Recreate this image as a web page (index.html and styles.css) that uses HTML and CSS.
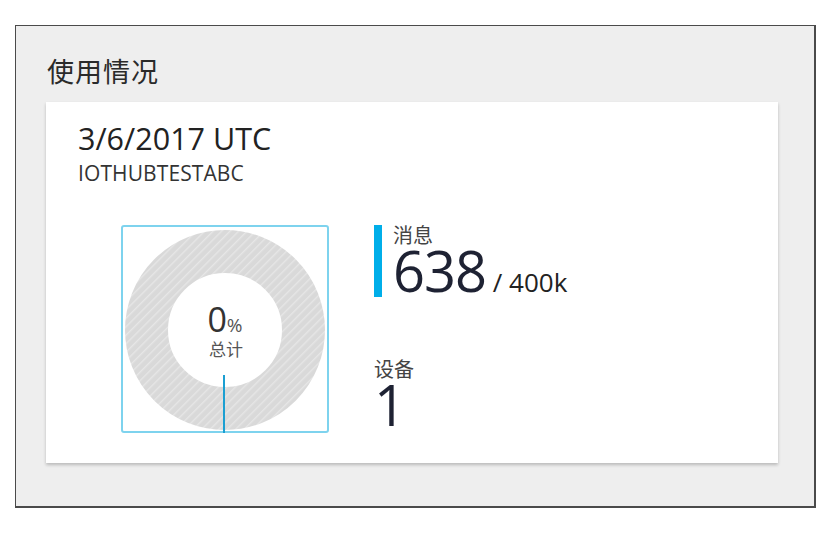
FILE: index.html
```html
<!DOCTYPE html>
<html lang="zh-CN">
<head>
<meta charset="utf-8">
<title>使用情况</title>
<link rel="stylesheet" href="styles.css">
</head>
<body>
<div class="panel">
  <h2 class="panel-title">使用情况</h2>
  <div class="card">
    <div class="card-head">
      <div class="date">3/6/2017 UTC</div>
      <div class="hub">IOTHUBTESTABC</div>
    </div>
    <div class="card-body">
      <div class="donut-box">
        <svg class="donut" width="204" height="204" viewBox="0 0 204 204">
          <defs>
            <pattern id="stripes" width="6" height="6" patternUnits="userSpaceOnUse" patternTransform="rotate(45)">
              <rect width="6" height="6" fill="#d9d9d9"/>
              <rect x="0" y="0" width="1.4" height="6" fill="#e6e6e6"/>
            </pattern>
          </defs>
          <circle cx="102" cy="103" r="78.5" fill="none" stroke="url(#stripes)" stroke-width="43"/>
          <line x1="101" y1="148" x2="101" y2="206" stroke="#1b9fd2" stroke-width="2"/>
        </svg>
        <div class="donut-center">
          <div class="pct"><span class="pct-num">0</span><span class="pct-sign">%</span></div>
          <div class="pct-label">总计</div>
        </div>
      </div>
      <div class="stats">
        <div class="stat stat-bar">
          <div class="stat-label">消息</div>
          <div class="stat-value"><span class="big">638</span><span class="of"> / 400k</span></div>
        </div>
        <div class="stat">
          <div class="stat-label">设备</div>
          <div class="stat-value"><span class="big">1</span></div>
        </div>
      </div>
    </div>
  </div>
</div>
</body>
</html>
```
FILE: styles.css
```css
html, body {
  margin: 0;
  padding: 0;
  background: #ffffff;
}
body {
  padding: 25px 0 0 15px;
  font-family: "Open Sans", "Noto Sans CJK SC", sans-serif;
  color: #222;
}
.panel {
  box-sizing: border-box;
  width: 801px;
  height: 483px;
  background: #eeeeee;
  border-style: solid;
  border-color: #4a4a4a;
  border-width: 1px 2px 2px 1px;
  padding: 25px 36px 0 30px;
}
.panel-title {
  margin: 0 0 11px 1px;
  font-family: "Noto Sans CJK SC", sans-serif;
  font-weight: 400;
  font-size: 27px;
  line-height: 40px;
  color: #2a2a2a;
  letter-spacing: 1px;
}
.card {
  box-sizing: border-box;
  height: 361px;
  background: #ffffff;
  box-shadow: 0 2px 3px rgba(0,0,0,0.22);
  padding: 19px 0 0 32px;
}
.date {
  font-size: 30.5px;
  line-height: 34px;
  color: #222;
}
.hub {
  font-family: "Open Sans", sans-serif;
  font-size: 21px;
  letter-spacing: 0.1px;
  line-height: 24px;
  color: #333;
  margin-top: 6px;
}
.card-body {
  display: flex;
  gap: 45px;
  margin-top: 40px;
  margin-left: 43px;
}
.donut-box {
  position: relative;
  box-sizing: border-box;
  width: 208px;
  height: 208px;
  border: 2px solid #7ed3ee;
  border-radius: 3px;
}
.donut {
  display: block;
  overflow: visible;
}
.donut-center {
  position: absolute;
  left: 0;
  right: 0;
  top: 77px;
  text-align: center;
}
.pct {
  line-height: 30px;
  color: #333;
}
.pct-num {
  font-size: 34px;
}
.pct-sign {
  font-size: 19px;
  color: #555;
}
.pct-label {
  font-family: "Noto Sans CJK SC", sans-serif;
  font-size: 17px;
  line-height: 20px;
  color: #555;
  margin-top: -2px;
  margin-left: 2px;
}
.stats {
  display: flex;
  flex-direction: column;
  gap: 62px;
}
.stat {
  display: flex;
  flex-direction: column;
  height: 72px;
}
.stat-bar {
  border-left: 8px solid #00aee9;
  padding-left: 11px;
}
.stat-label {
  font-family: "Noto Sans CJK SC", sans-serif;
  font-size: 20px;
  line-height: 20px;
  color: #444;
}
.stat-value {
  line-height: 50px;
  white-space: nowrap;
}
.big {
  font-size: 56px;
  font-weight: 400;
  color: #1e2233;
  letter-spacing: -1px;
}
.of {
  font-size: 26px;
  color: #222;
}
```
